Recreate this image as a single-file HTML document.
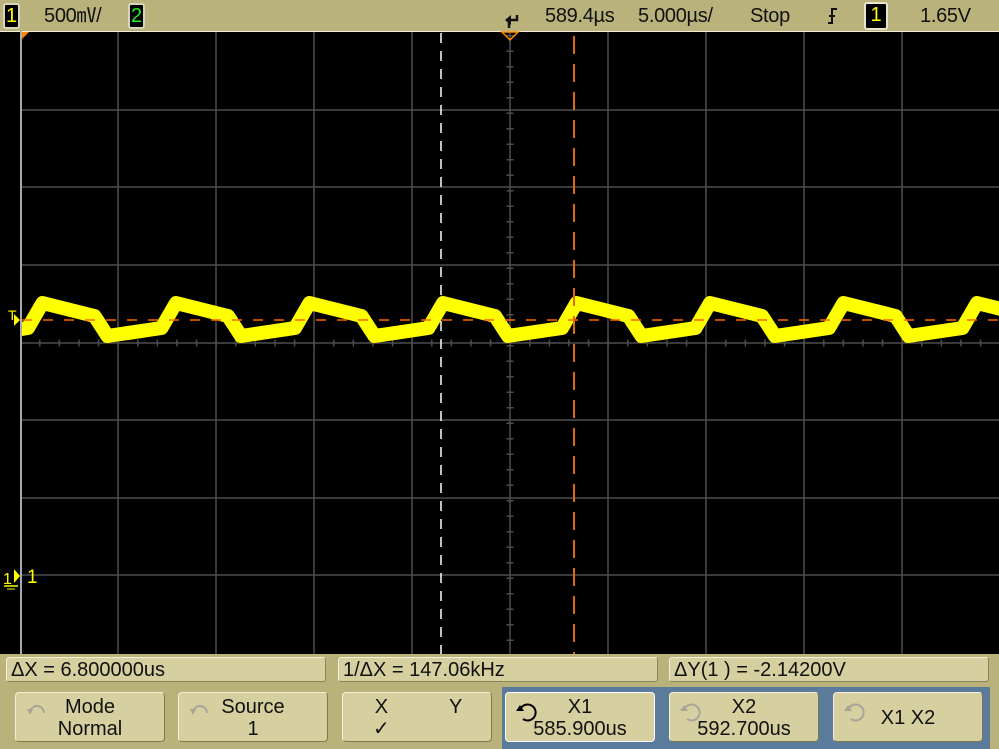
<!DOCTYPE html>
<html><head><meta charset="utf-8"><style>
body{margin:0;width:999px;height:749px;background:#bab27b;position:relative;overflow:hidden;font-family:"Liberation Sans",sans-serif;color:#111}
.t{position:absolute;font-size:20px;line-height:20px;white-space:nowrap;letter-spacing:-0.3px}
.cb{position:absolute;background:#000;border:2px solid #e8e4d0;border-radius:3px;font-size:20px;line-height:22px;text-align:center}
.m{position:absolute;top:657px;height:25px;background:#d6cf9f;border:1px solid #8a845a;border-top-color:#f4f0da;border-left-color:#f4f0da;border-radius:3px;box-sizing:border-box;font-size:20px;line-height:24px;padding-left:4px;white-space:nowrap;overflow:hidden}
.b{position:absolute;top:692px;height:50px;width:150px;background:#d6cf9f;border:1px solid #7e7850;border-top-color:#f4f0da;border-left-color:#f4f0da;border-radius:4px;box-sizing:border-box;text-align:center;font-size:20px;line-height:22px}
.b svg{position:absolute;left:8px;top:6px}
</style></head><body>
<div class="cb" style="left:3px;top:3px;width:13px;height:22px;color:#ff0;border-color:#d8d4c0">1</div>
<div class="t" style="left:44px;top:6px">500㎷/</div>
<div class="cb" style="left:128px;top:3px;width:13px;height:22px;color:#2e2;border-color:#d8d4c0">2</div>
<svg style="position:absolute;left:503px;top:13px" width="18" height="16"><path d="M14,2 V7 H6" fill="none" stroke="#111" stroke-width="2.5"/><polygon points="2,7 8,2 8,12" fill="#111"/><path d="M6,9 V15" stroke="#111" stroke-width="2.5"/></svg>
<div class="t" style="left:545px;top:6px">589.4µs</div>
<div class="t" style="left:638px;top:6px">5.000µs/</div>
<div class="t" style="left:750px;top:6px">Stop</div>
<svg style="position:absolute;left:826px;top:6px" width="14" height="20"><path d="M2,17 H6 V3 H11 M3,10 H9" fill="none" stroke="#111" stroke-width="2"/></svg>
<div class="cb" style="left:864px;top:2px;width:20px;height:24px;color:#ff0">1</div>
<div class="t" style="left:920px;top:6px">1.65V</div>

<svg style="position:absolute;left:0;top:31px" width="999" height="623">
<rect x="0" y="0" width="999" height="623" fill="#000"/>
<line x1="0" y1="0.5" x2="999" y2="0.5" stroke="#f0ecd8" stroke-width="1"/>
<g stroke="#4e4e4e" stroke-width="1.5">
<line x1="118" y1="1" x2="118" y2="623"/><line x1="216" y1="1" x2="216" y2="623"/><line x1="314" y1="1" x2="314" y2="623"/><line x1="412" y1="1" x2="412" y2="623"/><line x1="510" y1="1" x2="510" y2="623"/><line x1="608" y1="1" x2="608" y2="623"/><line x1="706" y1="1" x2="706" y2="623"/><line x1="804" y1="1" x2="804" y2="623"/><line x1="902" y1="1" x2="902" y2="623"/>
<line x1="20" y1="79" x2="999" y2="79"/><line x1="20" y1="156" x2="999" y2="156"/><line x1="20" y1="234" x2="999" y2="234"/><line x1="20" y1="312" x2="999" y2="312"/><line x1="20" y1="389" x2="999" y2="389"/><line x1="20" y1="467" x2="999" y2="467"/><line x1="20" y1="544" x2="999" y2="544"/>
</g>
<line x1="20" y1="312" x2="999" y2="312" stroke="#4e4e4e" stroke-width="7" stroke-dasharray="1.5,18.1" stroke-dashoffset="-19"/>
<line x1="510" y1="1" x2="510" y2="623" stroke="#4e4e4e" stroke-width="7" stroke-dasharray="1.5,14" stroke-dashoffset="-3"/>
<line x1="21" y1="0" x2="21" y2="623" stroke="#aaa" stroke-width="2"/>
<polygon points="22,1 29,1 22,8" fill="#f80"/>
<polygon points="502,1 518,1 510,9" fill="none" stroke="#f80" stroke-width="1.5"/>
<line x1="441" y1="2" x2="441" y2="623" stroke="#fff" stroke-width="1.5" stroke-dasharray="10,8"/>
<clipPath id="c"><rect x="22" y="0" width="980" height="623"/></clipPath>
<polyline clip-path="url(#c)" fill="none" stroke="#ff0" stroke-width="14" stroke-linejoin="round" points="-91,272 -39,285 -26,305 28,297 42.5,272 94.5,285 107.5,305 161.5,297 176,272 228,285 241,305 295,297 309.5,272 361.5,285 374.5,305 428.5,297 443,272 495,285 508,305 562,297 576.5,272 628.5,285 641.5,305 695.5,297 710,272 762,285 775,305 829,297 843.5,272 895.5,285 908.5,305 962.5,297 977,272 1029,285"/>
<line x1="22" y1="289" x2="999" y2="289" stroke="#f60" stroke-width="1.5" stroke-dasharray="10,11"/>
<line x1="574" y1="5" x2="574" y2="623" stroke="#e06a10" stroke-width="2" stroke-dasharray="18,10"/>
<text x="8" y="289" fill="#ff0" font-size="14" font-family="Liberation Sans">T</text>
<polygon points="14,283 20,289 14,295" fill="#ff0"/>
<text x="3" y="553" fill="#ff0" font-size="16" font-family="Liberation Sans">1</text>
<polygon points="14,538 20,545 14,552" fill="#ff0"/>
<text x="27" y="552" fill="#ff0" font-size="19" font-family="Liberation Sans">1</text>
<line x1="4" y1="555" x2="18" y2="555" stroke="#ff0" stroke-width="1.5"/><line x1="7" y1="558" x2="15" y2="558" stroke="#ff0"/>
</svg>

<div class="m" style="left:6px;width:320px">ΔX = 6.800000us</div>
<div class="m" style="left:338px;width:320px">1/ΔX = 147.06kHz</div>
<div class="m" style="left:669px;width:320px">ΔY(1 ) = -2.14200V</div>

<div style="position:absolute;left:502px;top:687px;width:488px;height:62px;background:#5b7b9d"></div>

<div class="b" style="left:15px"><svg width="26" height="26"><path d="M6,14 A7,7 0 1 1 20,14" fill="none" stroke="#aaa49a" stroke-width="2"/><polygon points="3,10 9,10 6,16" fill="#aaa49a"/></svg><div style="padding-top:3px">Mode<br>Normal</div></div>
<div class="b" style="left:178px"><svg width="26" height="26"><path d="M6,14 A7,7 0 1 1 20,14" fill="none" stroke="#aaa49a" stroke-width="2"/><polygon points="3,10 9,10 6,16" fill="#aaa49a"/></svg><div style="padding-top:3px">Source<br>1</div></div>
<div class="b" style="left:342px"><div style="position:absolute;left:30px;top:3px">X<br>✓</div><div style="position:absolute;left:106px;top:3px">Y</div></div>
<div class="b" style="left:505px;border-color:#fff"><svg width="26" height="26"><path d="M7,9 A8,8 0 1 1 9,20" fill="none" stroke="#000" stroke-width="2"/><polygon points="2,12 10,12 6,6" fill="#000"/></svg><div style="padding-top:3px">X1<br>585.900us</div></div>
<div class="b" style="left:669px"><svg width="26" height="26"><path d="M7,9 A8,8 0 1 1 9,20" fill="none" stroke="#aaa49a" stroke-width="2"/><polygon points="2,12 10,12 6,6" fill="#aaa49a"/></svg><div style="padding-top:3px">X2<br>592.700us</div></div>
<div class="b" style="left:833px"><svg width="26" height="26"><path d="M7,9 A8,8 0 1 1 9,20" fill="none" stroke="#aaa49a" stroke-width="2"/><polygon points="2,12 10,12 6,6" fill="#aaa49a"/></svg><div style="padding-top:14px">X1 X2</div></div>
</body></html>
